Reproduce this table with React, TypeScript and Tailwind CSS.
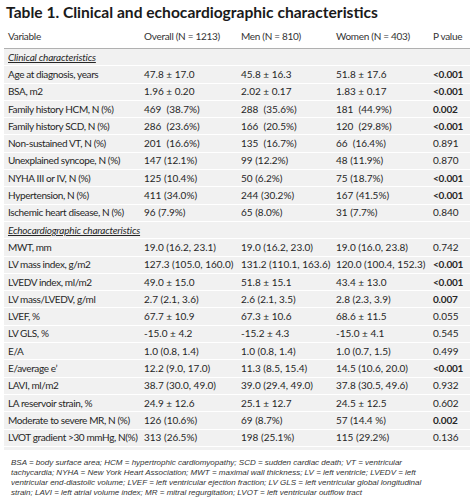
type Row = { label: string; overall: string; men: string; women: string; p: string; bold?: boolean };

const clinical: Row[] = [
  { label: "Age at diagnosis, years", overall: "47.8 ± 17.0", men: "45.8 ± 16.3", women: "51.8 ± 17.6", p: "<0.001", bold: true },
  { label: "BSA, m2", overall: "1.96 ± 0.20", men: "2.02 ± 0.17", women: "1.83 ± 0.17", p: "<0.001", bold: true },
  { label: "Family history HCM, N (%)", overall: "469  (38.7%)", men: "288  (35.6%)", women: "181  (44.9%)", p: "0.002", bold: true },
  { label: "Family history SCD, N (%)", overall: "286  (23.6%)", men: "166  (20.5%)", women: "120  (29.8%)", p: "<0.001", bold: true },
  { label: "Non-sustained VT, N (%)", overall: "201  (16.6%)", men: "135  (16.7%)", women: "66  (16.4%)", p: "0.891" },
  { label: "Unexplained syncope, N (%)", overall: "147 (12.1%)", men: "99 (12.2%)", women: "48 (11.9%)", p: "0.870" },
  { label: "NYHA III or IV, N (%)", overall: "125 (10.4%)", men: "50 (6.2%)", women: "75 (18.7%)", p: "<0.001", bold: true },
  { label: "Hypertension, N (%)", overall: "411 (34.0%)", men: "244 (30.2%)", women: "167 (41.5%)", p: "<0.001", bold: true },
  { label: "Ischemic heart disease, N (%)", overall: "96 (7.9%)", men: "65 (8.0%)", women: "31 (7.7%)", p: "0.840" },
];

const echo: Row[] = [
  { label: "MWT, mm", overall: "19.0 (16.2, 23.1)", men: "19.0 (16.2, 23.0)", women: "19.0 (16.0, 23.8)", p: "0.742" },
  { label: "LV mass index, g/m2", overall: "127.3 (105.0, 160.0)", men: "131.2 (110.1, 163.6)", women: "120.0 (100.4, 152.3)", p: "<0.001", bold: true },
  { label: "LVEDV index, ml/m2", overall: "49.0 ± 15.0", men: "51.8 ± 15.1", women: "43.4 ± 13.0", p: "<0.001", bold: true },
  { label: "LV mass/LVEDV, g/ml", overall: "2.7 (2.1, 3.6)", men: "2.6 (2.1, 3.5)", women: "2.8 (2.3, 3.9)", p: "0.007", bold: true },
  { label: "LVEF, %", overall: "67.7 ± 10.9", men: "67.3 ± 10.6", women: "68.6 ± 11.5", p: "0.055" },
  { label: "LV GLS, %", overall: "-15.0 ± 4.2", men: "-15.2 ± 4.3", women: "-15.0 ± 4.1", p: "0.545" },
  { label: "E/A", overall: "1.0 (0.8, 1.4)", men: "1.0 (0.8, 1.4)", women: "1.0 (0.7, 1.5)", p: "0.499" },
  { label: "E/average e’", overall: "12.2 (9.0, 17.0)", men: "11.3 (8.5, 15.4)", women: "14.5 (10.6, 20.0)", p: "<0.001", bold: true },
  { label: "LAVI, ml/m2", overall: "38.7 (30.0, 49.0)", men: "39.0 (29.4, 49.0)", women: "37.8 (30.5, 49.6)", p: "0.932" },
  { label: "LA reservoir strain, %", overall: "24.9 ± 12.6", men: "25.1 ± 12.7", women: "24.5 ± 12.5", p: "0.602" },
  { label: "Moderate to severe MR, N (%)", overall: "126 (10.6%)", men: "69 (8.7%)", women: "57 (14.4 %)", p: "0.002", bold: true },
  { label: "LVOT gradient >30 mmHg, N(%)", overall: "313 (26.5%)", men: "198 (25.1%)", women: "115 (29.2%)", p: "0.136" },
];

const grid = "grid grid-cols-[140px_97px_95px_97px_1fr]";

function DataRow({ row }: { row: Row }) {
  return (
    <div className={`${grid} h-[17.3px] items-center border-b border-white whitespace-pre`}>
      <div className="pl-1 tracking-[-0.38px]">{row.label}</div>
      <div>{row.overall}</div>
      <div>{row.men}</div>
      <div>{row.women}</div>
      <div className={row.bold ? "font-bold tracking-[-0.2px]" : ""}>{row.p}</div>
    </div>
  );
}

function Section({ title }: { title: string }) {
  return (
    <div className="flex h-[17.3px] items-center border-b border-white pl-1 italic underline tracking-[-0.2px]">
      {title}
    </div>
  );
}

export default function App() {
  return (
    <div className="h-[504px] w-[474px] bg-white text-[#262626] font-['Lato',sans-serif]">
      <h1 className="pl-[6px] pt-[1px] text-[15.6px] font-bold leading-[22px] text-[#1a1a1a]">
        Table 1. Clinical and echocardiographic characteristics
      </h1>

      <div className="mx-1 text-[10px]">
        <div className={`${grid} h-[26px] items-center border-b border-[#b0b0b0] pt-[2px] text-[#333] tracking-[-0.3px]`}>
          <div className="pl-1">Variable</div>
          <div>Overall (N = 1213)</div>
          <div>Men (N = 810)</div>
          <div>Women (N = 403)</div>
          <div>P value</div>
        </div>

        <div className="bg-[#f1f1f1] pb-[3px]">
          <Section title="Clinical characteristics" />
          {clinical.map((r) => (
            <DataRow key={r.label} row={r} />
          ))}
          <Section title="Echocardiographic characteristics" />
          {echo.map((r) => (
            <DataRow key={r.label} row={r} />
          ))}
        </div>
      </div>

      <p className="mt-[8px] pl-[11px] text-[8px] italic leading-[10px] text-[#333] font-['Liberation_Sans',sans-serif]">
        BSA = body surface area; HCM = hypertrophic cardiomyopathy; SCD = sudden cardiac death; VT = ventricular
        <br />
        tachycardia; NYHA = New York Heart Association; MWT = maximal wall thickness; LV = left ventricle; LVEDV = left
        <br />
        ventricular end-diastolic volume; LVEF = left ventricular ejection fraction; LV GLS = left ventricular global longitudinal
        <br />
        strain; LAVI = left atrial volume index; MR = mitral regurgitation; LVOT = left ventricular outflow tract
      </p>
    </div>
  );
}
